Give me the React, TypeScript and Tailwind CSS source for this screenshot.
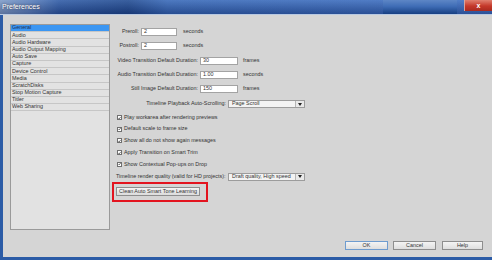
import React from 'react';

const categories = [
  'General',
  'Audio',
  'Audio Hardware',
  'Audio Output Mapping',
  'Auto Save',
  'Capture',
  'Device Control',
  'Media',
  'ScratchDisks',
  'Stop Motion Capture',
  'Titler',
  'Web Sharing',
];

const checks = [
  'Play workarea after rendering previews',
  'Default scale to frame size',
  'Show all do not show again messages',
  'Apply Transition on Smart Trim',
  'Show Contextual Pop-ups on Drop',
];

function Field({ value, width }: { value: string; width: string }) {
  return (
    <div className={`${width} ml-[2px] h-[8px] bg-white border border-[#a3a3a3] flex items-center px-[2px]`}>
      {value}
    </div>
  );
}

function Select({ value }: { value: string }) {
  return (
    <div className="ml-[2px] w-[77px] h-[8px] flex border border-[#9c9c9c] bg-[#f3f3f3]">
      <div className="flex-1 flex items-center px-[3px]">{value}</div>
      <div className="w-[9px] border-l border-[#b5b5b5] bg-[#e9e9e9] flex items-center justify-center">
        <svg width="4" height="3" viewBox="0 0 4 3">
          <path d="M0 0h4L2 3z" fill="#222" />
        </svg>
      </div>
    </div>
  );
}

function Check({ label }: { label: string }) {
  return (
    <div className="h-[7px] flex items-center">
      <div className="ml-[1px] w-[5px] h-[5px] bg-white border border-[#6f6f6f] flex items-center justify-center">
        <svg width="4" height="4" viewBox="0 0 4 4">
          <path d="M0.5 2 L1.6 3.2 L3.6 0.6" stroke="#222" strokeWidth="0.8" fill="none" />
        </svg>
      </div>
      <span className="ml-[2px]">{label}</span>
    </div>
  );
}

function Btn({ label, width, primary }: { label: string; width: string; primary?: boolean }) {
  return (
    <div
      className={`${width} h-[9px] flex items-center justify-center border bg-[linear-gradient(#f4f4f4,#dedede)] ${
        primary ? 'border-[#6f9ccf]' : 'border-[#8e8e8e]'
      }`}
    >
      {label}
    </div>
  );
}

export default function App() {
  return (
    <div className="w-[492px] h-[260px] flex flex-col overflow-hidden bg-[#d5d5d5] font-['Liberation_Sans',Arial,sans-serif] text-[5.4px] leading-none text-[#333]">
      {/* title bar */}
      <div className="h-[15px] flex items-stretch border-b border-[#b8c9e2] bg-[linear-gradient(180deg,rgba(255,255,255,0.12),rgba(0,0,30,0.25)),linear-gradient(90deg,#7d9bc8_0%,#5b80bd_6%,#2d5aa6_12%,#1f4a92_26%,#3567b8_34%,#3a6cc0_100%)]">
        <div className="pl-[2px] pt-[3px] text-[7px] text-white [text-shadow:0_0_2px_#334]">Preferences</div>
        <div className="flex-1" />
        <div className="w-[74px] mr-[7px] bg-[linear-gradient(180deg,#5d86c6_0%,#3f6db6_45%,#173f82_100%)]" />
        <div className="w-[28px] h-[11px] flex items-center justify-center border-l border-[#d9a39a] bg-[linear-gradient(180deg,#e0806f,#c4382a_55%,#a92a1f)] text-white text-[7px] font-bold">
          x
        </div>
      </div>

      {/* body */}
      <div className="flex-1 flex flex-col border-l-[3px] border-b-[3px] border-[#2b5ba6]">
        <div className="flex pl-[7px] pt-[9px]">
          {/* category list */}
          <div className="w-[100px] h-[206px] border border-[#9a9a9a] bg-[#e2e2e2]">
            {categories.map((c, i) => (
              <div
                key={c}
                className={`h-[7.2px] flex items-center pl-[1px] border-b border-[#c6c6c6] ${
                  i === 0 ? 'bg-[#3b96f2] text-[#1c2f55]' : ''
                }`}
              >
                {c}
              </div>
            ))}
          </div>

          {/* settings */}
          <div className="ml-[6px] pt-[4px] flex flex-col">
            <div className="h-[8px] flex items-center">
              <span className="w-[23px] text-right">Preroll:</span>
              <Field value="2" width="w-[36px]" />
              <span className="ml-[6px]">seconds</span>
            </div>
            <div className="mt-[6px] h-[8px] flex items-center">
              <span className="w-[23px] text-right">Postroll:</span>
              <Field value="2" width="w-[36px]" />
              <span className="ml-[6px]">seconds</span>
            </div>
            <div className="mt-[7px] h-[8px] flex items-center">
              <span className="w-[82px] text-right">Video Transition Default Duration:</span>
              <Field value="30" width="w-[38px]" />
              <span className="ml-[5px]">frames</span>
            </div>
            <div className="mt-[6px] h-[8px] flex items-center">
              <span className="w-[82px] text-right">Audio Transition Default Duration:</span>
              <Field value="1.00" width="w-[38px]" />
              <span className="ml-[5px]">seconds</span>
            </div>
            <div className="mt-[6px] h-[8px] flex items-center">
              <span className="w-[82px] text-right">Still Image Default Duration:</span>
              <Field value="150" width="w-[38px]" />
              <span className="ml-[5px]">frames</span>
            </div>
            <div className="mt-[7px] h-[8px] flex items-center">
              <span className="w-[110px] text-right">Timeline Playback Auto-Scrolling:</span>
              <Select value="Page Scroll" />
            </div>

            <div className="mt-[6px] flex flex-col gap-[4.7px]">
              {checks.map((c) => (
                <Check key={c} label={c} />
              ))}
            </div>

            <div className="mt-[5px] h-[8px] flex items-center">
              <span className="w-[110px]">Timeline render quality (valid for HD projects):</span>
              <Select value="Draft quality, High speed" />
            </div>

            <div className="mt-[1px] -ml-[4px] w-[96px] border-[2px] border-[#e3141f] pl-[2px] pt-[3px] pb-[4px]">
              <div className="w-[84px] h-[9px] flex items-center justify-center border border-[#8e8e8e] bg-[linear-gradient(#f4f4f4,#dcdcdc)]">
                Clean Auto Smart Tone Learning
              </div>
            </div>
          </div>
        </div>

        <div className="mt-[11px] flex justify-end pr-[9px]">
          <Btn label="OK" width="w-[43px]" primary />
          <div className="w-[5px]" />
          <Btn label="Cancel" width="w-[43px]" />
          <div className="w-[6px]" />
          <Btn label="Help" width="w-[41px]" />
        </div>
      </div>
    </div>
  );
}
